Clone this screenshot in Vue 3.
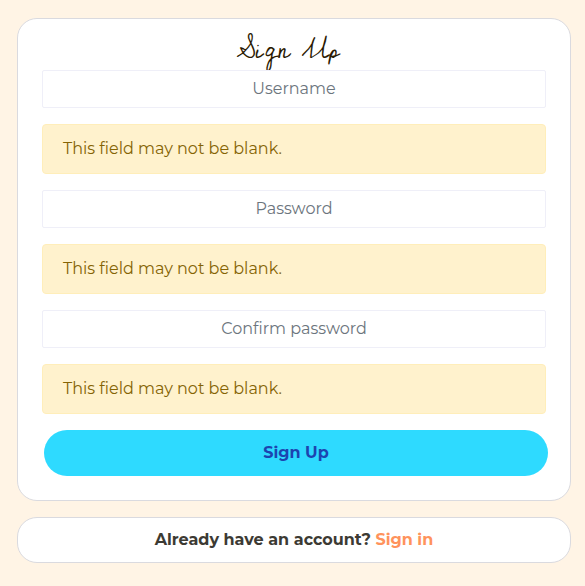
<script setup>
import { reactive } from 'vue'

const fields = [
  { name: 'username', label: 'Username', type: 'text' },
  { name: 'password1', label: 'Password', type: 'password' },
  { name: 'password2', label: 'Confirm password', type: 'password' }
]

const values = reactive({ username: '', password1: '', password2: '' })
const errors = reactive({
  username: ['This field may not be blank.'],
  password1: ['This field may not be blank.'],
  password2: ['This field may not be blank.']
})
</script>

<template>
  <main class="page">
    <section class="card">
      <h1 class="title">Sign Up</h1>
      <form class="form" novalidate @submit.prevent>
        <template v-for="field in fields" :key="field.name">
          <input
            :id="field.name"
            v-model="values[field.name]"
            class="input"
            :type="field.type"
            :name="field.name"
            :placeholder="field.label"
            :aria-label="field.label"
          />
          <div v-for="message in errors[field.name]" :key="message" class="alert" role="alert">
            {{ message }}
          </div>
        </template>
        <button class="submit" type="submit">Sign Up</button>
      </form>
    </section>
    <section class="card footer">
      <span>Already have an account? <a class="link" href="#signin">Sign in</a></span>
    </section>
  </main>
</template>

<style>
body {
  background: #fff4e5;
}
</style>

<style scoped>
.page {
  display: flex;
  flex-direction: column;
  gap: 16px;
  padding: 18px 14px 23px 17px;
  font-family: Montserrat, Inter, sans-serif;
  font-size: 16px;
  line-height: 24px;
}

.card {
  padding: 16px 24px 24px;
  border: 1px solid #dadadf;
  border-radius: 20px;
  background: #fff;
}

.title {
  margin: 0;
  padding: 0 12px 4px 0;
  color: #2b1a02;
  font-family: "Homemade Apple", "Cedarville Cursive", "Liberation Serif", cursive;
  font-size: 26px;
  font-weight: 400;
  line-height: 31px;
  text-align: center;
}

.form {
  display: flex;
  flex-direction: column;
  gap: 16px;
}

.input {
  box-sizing: border-box;
  width: 100%;
  height: 38px;
  padding: 5px 12px 7px;
  border: 1px solid #efeff8;
  border-radius: 2px;
  background: #fff;
  color: #495057;
  font: inherit;
  text-align: center;
}

.input::placeholder {
  color: #6c757d;
  opacity: 1;
}

.alert {
  padding: 12px 20px;
  border: 1px solid #ffeeba;
  border-radius: 4px;
  background: #fff2cd;
  color: #856404;
}

.submit {
  height: 46px;
  margin: 0 -2px 0 2px;
  border: 0;
  border-radius: 23px;
  background: #2edaff;
  color: #1c44b0;
  font: inherit;
  font-weight: 700;
  cursor: pointer;
}

.footer {
  padding: 10px 24px;
  color: #3c3a33;
  font-weight: 700;
  text-align: center;
}

.link {
  color: #ff935c;
  text-decoration: none;
}
</style>
